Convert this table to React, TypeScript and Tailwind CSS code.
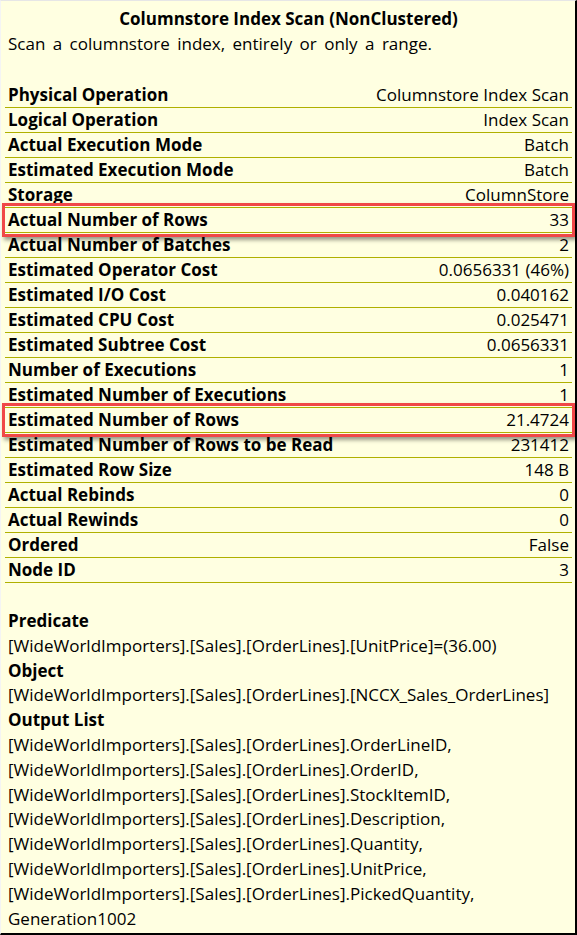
import React from "react";

type Row = { label: string; value: string; flagged?: boolean };

const rows: Row[] = [
  { label: "Physical Operation", value: "Columnstore Index Scan" },
  { label: "Logical Operation", value: "Index Scan" },
  { label: "Actual Execution Mode", value: "Batch" },
  { label: "Estimated Execution Mode", value: "Batch" },
  { label: "Storage", value: "ColumnStore" },
  { label: "Actual Number of Rows", value: "33", flagged: true },
  { label: "Actual Number of Batches", value: "2" },
  { label: "Estimated Operator Cost", value: "0.0656331 (46%)" },
  { label: "Estimated I/O Cost", value: "0.040162" },
  { label: "Estimated CPU Cost", value: "0.025471" },
  { label: "Estimated Subtree Cost", value: "0.0656331" },
  { label: "Number of Executions", value: "1" },
  { label: "Estimated Number of Executions", value: "1" },
  { label: "Estimated Number of Rows", value: "21.4724", flagged: true },
  { label: "Estimated Number of Rows to be Read", value: "231412" },
  { label: "Estimated Row Size", value: "148 B" },
  { label: "Actual Rebinds", value: "0" },
  { label: "Actual Rewinds", value: "0" },
  { label: "Ordered", value: "False" },
  { label: "Node ID", value: "3" },
];

const outputList = [
  "[WideWorldImporters].[Sales].[OrderLines].OrderLineID,",
  "[WideWorldImporters].[Sales].[OrderLines].OrderID,",
  "[WideWorldImporters].[Sales].[OrderLines].StockItemID,",
  "[WideWorldImporters].[Sales].[OrderLines].Description,",
  "[WideWorldImporters].[Sales].[OrderLines].Quantity,",
  "[WideWorldImporters].[Sales].[OrderLines].UnitPrice,",
  "[WideWorldImporters].[Sales].[OrderLines].PickedQuantity,",
  "Generation1002",
];

function PropRow({ row }: { row: Row }) {
  return (
    <div className="relative">
      <div className="h-[25px] flex items-center justify-between px-[3px] border-b border-[#b0b000]">
        <span className="font-bold">{row.label}</span>
        <span>{row.value}</span>
      </div>
      {/* red callout drawn over the row */}
      {row.flagged && (
        <div className="absolute -left-[3px] -right-[3px] -top-[5px] -bottom-[4px] border-[3px] border-[#f04848] shadow-[2px_3px_4px_rgba(0,0,0,0.4)]" />
      )}
    </div>
  );
}

export default function App() {
  return (
    <div
      className="w-[577px] h-[935px] bg-[#ffffe1] border-t border-l border-t-[#e6e6e6] border-l-[#f4f4f4] border-r-2 border-b-2 border-r-black border-b-black text-black text-[17px] overflow-hidden"
      style={{ fontFamily: '"Open Sans", "Noto Sans", sans-serif' }}
    >
      <div className="pt-[5px] pl-[4px] pr-[3px]">
        <div className="h-[25px] leading-[25px] text-center font-bold">
          Columnstore Index Scan (NonClustered)
        </div>
        <div className="h-[25px] leading-[25px] px-[3px] [word-spacing:3px]">
          Scan a columnstore index, entirely or only a range.
        </div>

        <div className="mt-[27px]">
          {rows.map((r) => (
            <PropRow key={r.label} row={r} />
          ))}
        </div>

        <div className="mt-[26px] px-[3px] leading-[24.8px]">
          <div className="font-bold">Predicate</div>
          <div>[WideWorldImporters].[Sales].[OrderLines].[UnitPrice]=(36.00)</div>
          <div className="font-bold">Object</div>
          <div>[WideWorldImporters].[Sales].[OrderLines].[NCCX_Sales_OrderLines]</div>
          <div className="font-bold">Output List</div>
          {outputList.map((l) => (
            <div key={l}>{l}</div>
          ))}
        </div>
      </div>
    </div>
  );
}
